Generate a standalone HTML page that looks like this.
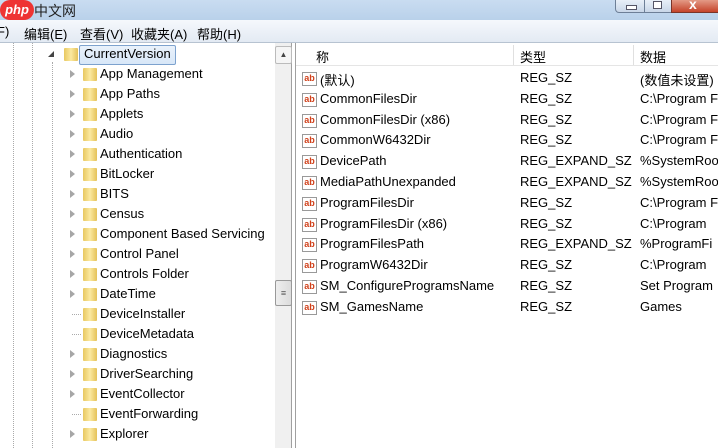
<!DOCTYPE html><html><head><meta charset="utf-8"><style>
body{margin:0;width:718px;height:448px;overflow:hidden;background:#fff;font-family:"Liberation Sans","Noto Sans CJK SC",sans-serif;font-size:13px;color:#000;position:relative}
.a{position:absolute;white-space:nowrap}
.title{left:0;top:0;width:718px;height:20px;background:linear-gradient(#c9dcf1,#b9d1ea)}
.menu{left:0;top:20px;width:718px;height:22px;background:linear-gradient(#f5f8fc,#e3eaf3);border-bottom:1px solid #b7c3d1}
.tree{left:0;top:43px;width:291px;height:405px;border-right:1px solid #a0a0a0;background:#fff}
.right{left:295px;top:43px;width:423px;height:405px;border-left:1px solid #a0a0a0;background:#fff}
.fold{position:absolute;width:14px;height:13px;background:linear-gradient(90deg,#e8c860,#fbe9a0 50%,#e4c158);border-radius:1px}
.arr{position:absolute;width:0;height:0;border-left:5px solid #a6a6a6;border-top:4px solid transparent;border-bottom:4px solid transparent}
.ab{position:absolute;width:13px;height:12px;border:1px solid #999;background:#fff;color:#d0401a;font-size:9px;font-weight:bold;line-height:11px;text-align:center}
</style></head><body>
<div class="a title"></div>
<div class="a" style="left:0;top:0;width:34px;height:20px;background:#e33;border-radius:10px;color:#fff;font-size:13px;font-style:italic;font-weight:bold;line-height:20px;text-align:center">php</div>
<div class="a" style="left:34px;top:1px;font-size:14px;color:#222">中文网</div>
<div class="a" style="left:615px;top:0;width:28px;height:12px;background:linear-gradient(#e8eff8,#c8d6e8);border:1px solid #6d7f97;border-top:none;border-radius:0 0 0 4px"></div>
<div class="a" style="left:644px;top:0;width:26px;height:12px;background:linear-gradient(#e8eff8,#c8d6e8);border:1px solid #6d7f97;border-top:none"></div>
<div class="a" style="left:671px;top:0;width:47px;height:12px;background:linear-gradient(#e39a86,#c5432a);border:1px solid #7a3428;border-top:none"></div>
<div class="a" style="left:626px;top:5px;width:9px;height:3px;border:1px solid #556;background:#fff"></div>
<div class="a" style="left:653px;top:1px;width:7px;height:6px;border:1px solid #556;background:#fff"></div>
<div class="a" style="left:689px;top:-4px;color:#fff;font-weight:bold;font-size:14px">x</div>
<div class="a menu"></div>
<div class="a" style="left:-3px;top:24px;">F)</div>
<div class="a" style="left:24px;top:24px;">编辑(E)</div>
<div class="a" style="left:80px;top:24px;">查看(V)</div>
<div class="a" style="left:131px;top:24px;">收藏夹(A)</div>
<div class="a" style="left:197px;top:24px;">帮助(H)</div>
<div class="a tree"></div>
<div class="a" style="left:13px;top:43px;height:405px;border-left:1px dotted #aaa"></div>
<div class="a" style="left:32px;top:43px;height:405px;border-left:1px dotted #aaa"></div>
<div class="a" style="left:52px;top:62px;height:386px;border-left:1px dotted #aaa"></div>
<div class="a" style="left:275px;top:43px;width:16px;height:405px;background:#f0f0f0"></div>
<div class="a" style="left:275px;top:46px;width:15px;height:16px;border:1px solid #bbb;border-radius:2px;background:#f5f5f5;font-size:8px;text-align:center;line-height:16px;color:#444">▲</div>
<div class="a" style="left:275px;top:280px;width:15px;height:24px;border:1px solid #999;border-radius:2px;background:linear-gradient(90deg,#eee,#dcdcdc);font-size:9px;text-align:center;line-height:24px;color:#555">≡</div>
<div class="a" style="left:48px;top:51px;width:0;height:0;border-right:6px solid #444;border-top:6px solid transparent"></div>
<div class="fold" style="left:64px;top:48px"></div>
<div class="a" style="left:79px;top:45px;width:95px;height:18px;border:1px solid #7da2ce;border-radius:2px;background:linear-gradient(#eaf2fb,#d8e7f8)"></div>
<div class="a" style="left:84px;top:46px">CurrentVersion</div>
<div id="t"></div>
<div class="a right"></div>
<div class="a" style="left:296px;top:45px;width:422px;height:20px;border-bottom:1px solid #e5e5e5"></div>
<div class="a" style="left:513px;top:45px;height:20px;border-left:1px solid #e0e0e0"></div>
<div class="a" style="left:633px;top:45px;height:20px;border-left:1px solid #e0e0e0"></div>
<div class="a" style="left:316px;top:47px">称</div>
<div class="a" style="left:520px;top:47px">类型</div>
<div class="a" style="left:640px;top:47px">数据</div>
<div id="r"></div>
<script>
var tr=["App Management","App Paths","Applets","Audio","Authentication","BitLocker","BITS","Census","Component Based Servicing","Control Panel","Controls Folder","DateTime","DeviceInstaller","DeviceMetadata","Diagnostics","DriverSearching","EventCollector","EventForwarding","Explorer"];
var noarr={12:1,13:1,17:1};var h="";
tr.forEach(function(s,i){var y=66+i*20;
h+=(noarr[i]?'<div class="a" style="left:72px;top:'+(y+8)+'px;width:9px;border-top:1px dotted #aaa"></div>':'<div class="arr" style="left:70px;top:'+(y+4)+'px"></div>')+'<div class="fold" style="left:83px;top:'+(y+2)+'px"></div><div class="a" style="left:100px;top:'+(y)+'px">'+s+'</div>';});
document.getElementById("t").innerHTML=h;
var rr=[["(默认)","REG_SZ","(数值未设置)"],["CommonFilesDir","REG_SZ","C:\\Program F"],["CommonFilesDir (x86)","REG_SZ","C:\\Program F"],["CommonW6432Dir","REG_SZ","C:\\Program F"],["DevicePath","REG_EXPAND_SZ","%SystemRoo"],["MediaPathUnexpanded","REG_EXPAND_SZ","%SystemRoo"],["ProgramFilesDir","REG_SZ","C:\\Program F"],["ProgramFilesDir (x86)","REG_SZ","C:\\Program"],["ProgramFilesPath","REG_EXPAND_SZ","%ProgramFi"],["ProgramW6432Dir","REG_SZ","C:\\Program"],["SM_ConfigureProgramsName","REG_SZ","Set Program"],["SM_GamesName","REG_SZ","Games"]];
h="";rr.forEach(function(r,i){var y=70+i*20.8;
h+='<div class="ab" style="left:302px;top:'+(y+2)+'px">ab</div><div class="a" style="left:320px;top:'+y+'px">'+r[0]+'</div><div class="a" style="left:520px;top:'+y+'px">'+r[1]+'</div><div class="a" style="left:640px;top:'+y+'px">'+r[2]+'</div>';});
document.getElementById("r").innerHTML=h;
</script>
</body></html>
